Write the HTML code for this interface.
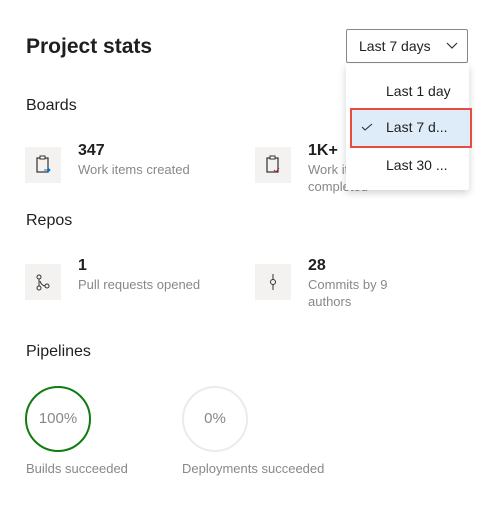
<!DOCTYPE html>
<html><head><style>
body{margin:0;width:498px;height:511px;background:#fff;font-family:"Segoe UI","Liberation Sans",sans-serif;color:#201f1e;position:relative;overflow:hidden}
.a{position:absolute;white-space:nowrap}
.ib{position:absolute;width:36px;height:36px;background:#f3f2f1}
.ib svg{position:absolute;left:0;top:0}
.n{font-size:16px;font-weight:bold}
.s{font-size:13px;color:#8a8886}
.h{font-size:16px}
</style></head><body>
<div class="a" style="left:26px;top:35px;font-size:21px;font-weight:bold">Project stats</div>
<div class="a" style="left:346px;top:29px;width:120px;height:32px;border:1px solid #8a8886;border-radius:2px"></div>
<div class="a" style="left:359px;top:38px;font-size:14px">Last 7 days</div>
<svg class="a" style="left:446px;top:42px" width="12" height="8"><path d="M1 1l5 5 5-5" fill="none" stroke="#323130" stroke-width="1.2"/></svg>

<div class="a h" style="left:26px;top:97px">Boards</div>
<div class="ib" style="left:25px;top:147px"><svg width="36" height="36"><rect x="12" y="11" width="11" height="14" fill="none" stroke="#323130" stroke-width="1.2"/><rect x="15" y="9" width="5" height="3" fill="#fff" stroke="#323130"/><path d="M19 23h6m-2-2l2 2-2 2" stroke="#0078d4" fill="none"/></svg></div>
<div class="a n" style="left:78px;top:142px">347</div>
<div class="a s" style="left:78px;top:162px">Work items created</div>
<div class="ib" style="left:255px;top:147px"><svg width="36" height="36"><rect x="12" y="11" width="11" height="14" fill="none" stroke="#323130" stroke-width="1.2"/><rect x="15" y="9" width="5" height="3" fill="#fff" stroke="#323130"/><path d="M19 23l2 2 3-4" stroke="#a4262c" fill="none"/></svg></div>
<div class="a n" style="left:308px;top:142px">1K+</div>
<div class="a s" style="left:308px;top:162px">Work items</div>
<div class="a s" style="left:308px;top:179px">completed</div>

<div class="a h" style="left:26px;top:212px">Repos</div>
<div class="ib" style="left:25px;top:264px"><svg width="36" height="36"><circle cx="14" cy="13" r="2" fill="none" stroke="#323130"/><circle cx="14" cy="24" r="2" fill="none" stroke="#323130"/><circle cx="22" cy="22" r="2" fill="none" stroke="#323130"/><path d="M14 15v7M15 17q1 4 5 5" fill="none" stroke="#323130"/></svg></div>
<div class="a n" style="left:78px;top:257px">1</div>
<div class="a s" style="left:78px;top:277px">Pull requests opened</div>
<div class="ib" style="left:255px;top:264px"><svg width="36" height="36"><circle cx="18" cy="18" r="2.5" fill="none" stroke="#323130"/><path d="M18 10v5.5M18 20.5V26" stroke="#323130"/></svg></div>
<div class="a n" style="left:308px;top:257px">28</div>
<div class="a s" style="left:308px;top:277px">Commits by 9</div>
<div class="a s" style="left:308px;top:294px">authors</div>

<div class="a h" style="left:26px;top:343px">Pipelines</div>
<div class="a" style="left:25px;top:386px;width:62px;height:62px;border:2px solid #107c10;border-radius:50%"></div>
<div class="a" style="left:25px;top:410px;width:66px;text-align:center;font-size:15px;color:#8a8886">100%</div>
<div class="a" style="left:182px;top:386px;width:62px;height:62px;border:2px solid #edebe9;border-radius:50%"></div>
<div class="a" style="left:182px;top:410px;width:66px;text-align:center;font-size:15px;color:#8a8886">0%</div>
<div class="a s" style="left:26px;top:461px">Builds succeeded</div>
<div class="a s" style="left:182px;top:461px">Deployments succeeded</div>

<div class="a" style="left:346px;top:64px;width:123px;height:126px;background:#fff;box-shadow:0 3px 8px rgba(0,0,0,.18);border-radius:2px"></div>
<div class="a" style="left:386px;top:83px;font-size:14px">Last 1 day</div>
<div class="a" style="left:350px;top:108px;width:118px;height:36px;background:#deecf9;border:2px solid #e74c3c;box-sizing:content-box"></div>
<svg class="a" style="left:361px;top:123px" width="12" height="9"><path d="M1 4l3 3 7-6" fill="none" stroke="#323130" stroke-width="1.1"/></svg>
<div class="a" style="left:386px;top:119px;font-size:14px">Last 7 d...</div>
<div class="a" style="left:386px;top:157px;font-size:14px">Last 30 ...</div>
</body></html>
